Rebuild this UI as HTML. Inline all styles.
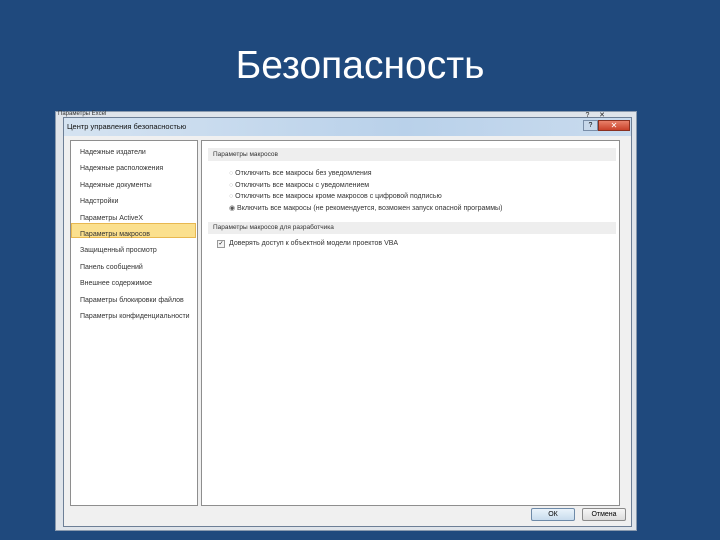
<!DOCTYPE html>
<html><head><meta charset="utf-8"><style>
*{margin:0;padding:0;box-sizing:border-box}
body{width:720px;height:540px;background:#1f497d;position:relative;overflow:hidden;font-family:"Liberation Sans","DejaVu Sans",sans-serif}
.t{position:absolute;left:0;width:720px;top:44px;text-align:center;color:#fff;font-size:39px}
.abs{position:absolute}
.s{font-size:7px;color:#333;white-space:nowrap}
</style></head><body>
<div class="t">Безопасность</div>
<div class="abs" style="left:55px;top:111px;width:582px;height:420px;background:#dfe4ea;border:1px solid #8a9aae"></div>
<div class="abs s" style="left:58px;top:111px;font-size:6px">Параметры Excel</div>
<div class="abs" style="left:566px;top:111px;width:70px;height:8px;font-size:7px;color:#222">&nbsp;&nbsp;&nbsp;&nbsp;&nbsp;&nbsp;&nbsp;&nbsp;&nbsp;&nbsp;? &nbsp;&nbsp;&nbsp;&nbsp;✕</div>
<div class="abs" style="left:63px;top:117px;width:569px;height:410px;background:#f0f0f0;border:1px solid #6d7f96"></div>
<div class="abs" style="left:64px;top:118px;width:567px;height:18px;background:linear-gradient(90deg,#d5e3f1,#b9d1ea 60%,#c9dbee)"></div>
<div class="abs s" style="left:67px;top:122px;font-size:7.5px;color:#111">Центр управления безопасностью</div>
<div class="abs" style="left:583px;top:120px;width:15px;height:11px;background:#c8d8ea;border:1px solid #7a8ea8;font-size:7px;text-align:center;line-height:9px">?</div>
<div class="abs" style="left:598px;top:120px;width:32px;height:11px;background:linear-gradient(#e8806a,#c9412a);border:1px solid #8a3020;color:#fff;font-size:8px;text-align:center;line-height:9px">✕</div>
<div class="abs" style="left:70px;top:140px;width:128px;height:366px;background:#fff;border:1px solid #8e8e8e"></div>
<div class="abs" style="left:71px;top:223px;width:125px;height:15px;background:#fbe08e;border:1px solid #e8b850"></div>
<div class="abs s" style="left:80px;top:145px;line-height:16.4px">Надежные издатели<br>Надежные расположения<br>Надежные документы<br>Надстройки<br>Параметры ActiveX<br>Параметры макросов<br>Защищенный просмотр<br>Панель сообщений<br>Внешнее содержимое<br>Параметры блокировки файлов<br>Параметры конфиденциальности</div>
<div class="abs" style="left:201px;top:140px;width:419px;height:366px;background:#fff;border:1px solid #8e8e8e"></div>
<div class="abs" style="left:208px;top:148px;width:408px;height:13px;background:#eeeeee"></div>
<div class="abs s" style="left:213px;top:151px;font-size:6.5px">Параметры макросов</div>
<div class="abs s" style="left:229px;top:168px;line-height:11.5px;font-size:7px">
<span style="color:#bbb">○</span> Отключить все макросы без уведомления<br>
<span style="color:#bbb">○</span> Отключить все макросы с уведомлением<br>
<span style="color:#bbb">○</span> Отключить все макросы кроме макросов с цифровой подписью<br>
<span style="color:#555">◉</span> Включить все макросы (не рекомендуется, возможен запуск опасной программы)</div>
<div class="abs" style="left:208px;top:222px;width:408px;height:12px;background:#eeeeee"></div>
<div class="abs s" style="left:213px;top:224px;font-size:6.5px">Параметры макросов для разработчика</div>
<div class="abs" style="left:217px;top:240px;width:8px;height:8px;border:1px solid #999;background:#f4f4f4;font-size:6px;line-height:6px;text-align:center">✓</div>
<div class="abs s" style="left:229px;top:240px">Доверять доступ к объектной модели проектов VBA</div>
<div class="abs" style="left:531px;top:508px;width:44px;height:13px;border:1px solid #6e8aa8;border-radius:2px;background:linear-gradient(#eaf3fb,#c8dced);font-size:7px;text-align:center;line-height:11px">ОК</div>
<div class="abs" style="left:582px;top:508px;width:44px;height:13px;border:1px solid #8a8a8a;border-radius:2px;background:linear-gradient(#f6f6f6,#dcdcdc);font-size:7px;text-align:center;line-height:11px">Отмена</div>
</body></html>
